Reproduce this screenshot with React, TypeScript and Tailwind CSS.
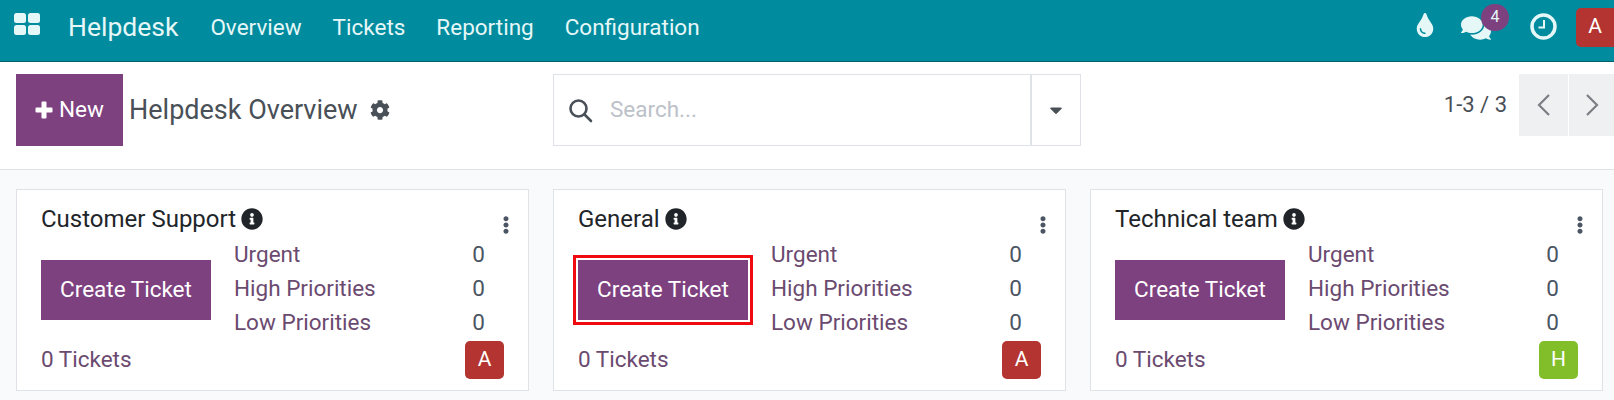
import { FaCaretDown, FaCog, FaComments, FaEllipsisV, FaInfoCircle, FaTint } from "react-icons/fa";

const menuItems = ["Overview", "Tickets", "Reporting", "Configuration"];

const teams = [
    { name: "Customer Support", user: "A", userColor: "bg-[#b33430]", highlight: false },
    { name: "General", user: "A", userColor: "bg-[#b33430]", highlight: true },
    { name: "Technical team", user: "H", userColor: "bg-[#82be2a]", highlight: false },
];

const stats = ["Urgent", "High Priorities", "Low Priorities"];

function TeamCard({ team }: { team: (typeof teams)[number] }) {
    return (
        <div className="w-[513px] h-[202px] shrink-0 bg-white border border-[#dfe2e7] pl-[24px] pr-[24px] pt-[14px] flex flex-col">
            <div className="flex items-start justify-between h-[54px]">
                <div className="flex items-center gap-[5px] text-[24px] leading-[30px] text-[#212529]">
                    {team.name}
                    <FaInfoCircle size={22} className="text-[#212529]" />
                </div>
                <FaEllipsisV size={18} className="text-[#4b5563] mt-[12px] -mr-[11px]" />
            </div>
            <div className="flex h-[84px] items-stretch">
                <div className="w-[193px] shrink-0 flex items-center -mt-[10px] h-[84px]">
                    <div className={team.highlight ? "-ml-[5px] p-[2px] border-[3px] border-[#ee0a0f] bg-white" : ""}>
                        <button className="bg-[#7e417f] text-white text-[22.5px] w-[170px] h-[60px] flex items-center justify-center">
                            Create Ticket
                        </button>
                    </div>
                </div>
                <div className="flex-1 flex flex-col -mt-[20px]">
                    {stats.map((s) => (
                        <div key={s} className="h-[34px] shrink-0 flex items-center justify-between pr-[19px] text-[22.5px]">
                            <span className="text-[#6b4a70]">{s}</span>
                            <span className="text-[#4b5563]">0</span>
                        </div>
                    ))}
                </div>
            </div>
            <div className="flex items-center justify-between -mt-[1px]">
                <span className="text-[22.5px] text-[#6b4a70]">0 Tickets</span>
                <div className={`w-[39px] h-[38px] rounded-[5px] flex items-center justify-center text-white text-[21px] ${team.userColor}`}>
                    {team.user}
                </div>
            </div>
        </div>
    );
}

export default function App() {
    return (
        <div className="w-[1614px] h-[400px] overflow-hidden bg-[#f9fafb] font-['Roboto',sans-serif]">
            <div className="h-[62px] bg-[#008c9e] border-b border-[#005f6b] flex items-center pl-[14px] text-[#e6f7f8]">
                <svg width="26" height="22" viewBox="0 0 26 22" className="mb-[13px] shrink-0" fill="currentColor">
                    <rect x="0" y="0" width="12" height="10" rx="2.5" />
                    <rect x="14" y="0" width="12" height="10" rx="2.5" />
                    <rect x="0" y="12" width="12" height="10" rx="2.5" />
                    <rect x="14" y="12" width="12" height="10" rx="2.5" />
                </svg>
                <span className="ml-[28px] text-[26.5px] mb-[7px]">Helpdesk</span>
                <div className="flex ml-[32px] gap-[31px] text-[22.5px] mb-[6px]">
                    {menuItems.map((m) => (
                        <span key={m}>{m}</span>
                    ))}
                </div>
                <div className="ml-auto flex items-center h-full">
                    <FaTint size={24} className="mb-[11px]" />
                    <div className="relative ml-[24px] mb-[6px]">
                        <FaComments size={30} />
                        <span className="absolute -top-[9px] left-[20px] w-[28px] h-[27px] rounded-full bg-[#7e417f] flex items-center justify-center text-[16px]">
                            4
                        </span>
                    </div>
                    <svg width="27" height="27" viewBox="0 0 27 27" fill="none" stroke="currentColor" className="ml-[39px] mb-[8px]">
                        <circle cx="13.5" cy="13.5" r="11.5" strokeWidth="3.5" />
                        <path d="M14 7v7.5H8.5" strokeWidth="2" />
                    </svg>
                    <div className="ml-[19px] mb-[7px] w-[38px] h-[39px] rounded-l-[5px] bg-[#b33430] flex items-center justify-center text-[21px] text-white">
                        A
                    </div>
                </div>
            </div>

            <div className="h-[108px] bg-white border-b border-[#dfe2e7] pt-[12px] pl-[16px] flex items-start">
                <button className="w-[107px] h-[72px] bg-[#7e417f] text-white text-[22.5px] flex items-center justify-center gap-[6px]">
                    <svg width="18" height="18" viewBox="0 0 18 18" fill="currentColor"><path d="M6.5 1.5a1 1 0 0 1 1-1h3a1 1 0 0 1 1 1v5h5a1 1 0 0 1 1 1v3a1 1 0 0 1-1 1h-5v5a1 1 0 0 1-1 1h-3a1 1 0 0 1-1-1v-5h-5a1 1 0 0 1-1-1v-3a1 1 0 0 1 1-1h5z" /></svg>
                    New
                </button>
                <div className="h-[72px] ml-[6px] w-[424px] flex items-center text-[27px] text-[#495057]">
                    Helpdesk Overview
                    <FaCog size={20} className="ml-[12px]" />
                </div>
                <div className="w-[528px] h-[72px] border border-[#dfe2e7] flex">
                    <div className="flex-1 flex items-center pl-[14px] text-[22.5px] text-[#bcc1c9] gap-[17px]">
                        <svg width="25" height="25" viewBox="0 0 25 25" fill="none" stroke="#495057" strokeWidth="2.6" strokeLinecap="round">
                            <circle cx="10.5" cy="10.5" r="8" />
                            <path d="m16.5 16.5 6.5 6.5" />
                        </svg>
                        Search...
                    </div>
                    <div className="w-[50px] border-l-2 border-[#dfe2e7] flex items-center justify-center">
                        <FaCaretDown size={20} className="text-[#495057]" />
                    </div>
                </div>
                <div className="ml-auto flex items-start">
                    <span className="text-[22px] text-[#495057] mt-[14px] mr-[12px]">1-3 / 3</span>
                    <div className="w-[49px] h-[62px] bg-[#eef0f2] flex items-center justify-center">
                        <svg width="16" height="24" viewBox="0 0 16 24" fill="none" stroke="#7b7f84" strokeWidth="2.2"><path d="M13 2 3 12l10 10" /></svg>
                    </div>
                    <div className="w-[45px] ml-[1px] h-[62px] bg-[#eef0f2] flex items-center justify-center">
                        <svg width="16" height="24" viewBox="0 0 16 24" fill="none" stroke="#7b7f84" strokeWidth="2.2"><path d="m3 2 10 10L3 22" /></svg>
                    </div>
                </div>
            </div>

            <div className="pl-[16px] pt-[19px] flex gap-[24px]">
                {teams.map((t) => (
                    <TeamCard key={t.name} team={t} />
                ))}
            </div>
        </div>
    );
}
